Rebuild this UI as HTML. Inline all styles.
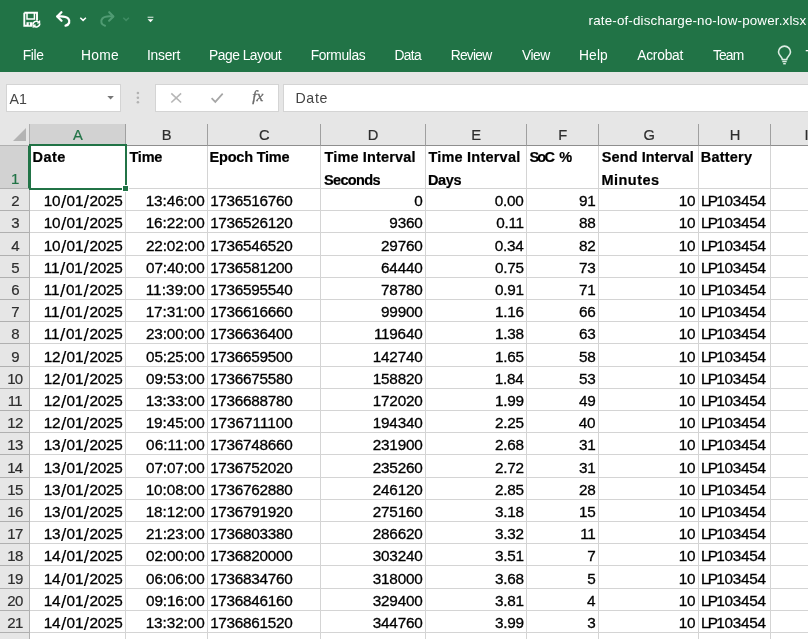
<!DOCTYPE html>
<html lang="en">
<head>
<meta charset="utf-8">
<title>rate-of-discharge-no-low-power.xlsx - Excel</title>
<style>
html,body{margin:0;padding:0;}
body{width:808px;height:639px;overflow:hidden;background:#fff;font-family:"Liberation Sans",sans-serif;}
#app{will-change:transform;position:relative;width:808px;height:639px;overflow:hidden;background:#fff;}
.t{position:absolute;white-space:nowrap;}
#grid .t{-webkit-text-stroke:0.3px;}
#rowhead .t,#colhead .t{-webkit-text-stroke:0.2px;}
#grid .b{-webkit-text-stroke:0.2px;}
.t i{font-style:normal;}
#top{position:absolute;left:0;top:0;width:808px;height:72px;background:#217346;}
.ico{position:absolute;}
#fbar{position:absolute;left:0;top:72px;width:808px;height:52px;background:#e6e6e6;}
.box{position:absolute;top:12px;height:26px;background:#fff;border:1px solid #d4d4d4;}
#namebox{left:6px;width:113px;}
#fxbox{left:155px;width:122px;}
#finput{left:283px;width:540px;}
#chrometext{position:absolute;left:0;top:0;}
#colhead{position:absolute;left:0;top:0;width:808px;height:145px;}
.corner{position:absolute;left:0;top:124px;width:30px;height:22px;background:#e6e6e6;box-sizing:border-box;border-bottom:1px solid #b0b0b0;border-right:1px solid #b0b0b0;}
.corner i{position:absolute;left:13px;top:4px;width:0;height:0;border-left:13px solid transparent;border-bottom:13px solid #b4b4b4;}
.ch{position:absolute;top:124px;box-sizing:border-box;background:#e6e6e6;border-right:1px solid #a0a0a0;border-bottom:1px solid #8e8e8e;height:22px;}
.ch.sel{background:#d2d2d2;border-bottom:2px solid #217346;}
#rowhead{position:absolute;left:0;top:0;width:30px;height:639px;}
.rh{position:absolute;left:0;width:30px;box-sizing:border-box;background:#e6e6e6;border-bottom:1px solid #b0b0b0;border-right:1px solid #b0b0b0;}
.rh.sel{background:#d2d2d2;border-right:2px solid #217346;}
#grid{position:absolute;left:0;top:0;width:808px;height:639px;}
.vl{position:absolute;top:146px;width:1px;height:500px;background:#d4d4d4;}
.hl{position:absolute;left:30px;width:800px;height:1px;background:#d4d4d4;}
#selbox{position:absolute;left:29px;top:144px;width:94px;height:42px;border:2px solid #217346;}
#selhandle{position:absolute;left:122px;top:185px;width:5px;height:5px;background:#217346;border:1px solid #fff;}
#topicons{position:absolute;left:0;top:0;}
#fbicons{position:absolute;left:0;top:72px;}
.d i{font-size:19px;line-height:0;position:relative;top:2px;-webkit-text-stroke:0.1px;}
</style>
</head>
<body>
<div id="app">
<div id="top"></div>
<svg id="topicons" width="808" height="72" viewBox="0 0 808 72" fill="none" stroke="#fff" stroke-width="1.4">
<g id="ico-save">
<path d="M24.3 12.8h12.700v7.600M24.3 12.800v13h8" stroke-width="1.900"/>
<path d="M27 13v6h7.400v-6" stroke-width="1.500"/>
<path d="M26.500 23.800h6" stroke-width="3.200"/>
<path d="M29.300 22.600v2.600" stroke="#217346" stroke-width="1.100"/>
<path d="M33 24.600a3.400 3.400 0 0 1 6.200-1.900M39.800 23.600a3.400 3.400 0 0 1-6.200 1.900" stroke-width="1.500"/>
<path d="M39.600 20.400v2.600h-2.600M33.200 27.800v-2.600h2.600" stroke-width="1.200"/>
</g>
<g id="ico-undo" stroke-width="2.300" stroke-linecap="round" stroke-linejoin="round">
<path d="M61.4 12.2L57.2 16.5l4.3 4.2"/>
<path d="M57.6 16.5c4-.4 8.200-.6 10.600 2.000c2.400 2.800 1 6.200-2.600 7.200"/>
</g>
<path d="M80.300 17.700l2.800 2.700l2.800-2.700" stroke-width="1.500"/>
<g id="ico-redo" stroke="#509b73" stroke-width="2.100" stroke-linecap="round" stroke-linejoin="round">
<path d="M109.2 12.2l4.200 4.300l-4.300 4.200"/>
<path d="M113 16.5c-4-.4-8.200-.6-10.600 2.000c-2.400 2.800-1 6.200 2.600 7.200"/>
</g>
<path d="M123.300 17.700l2.800 2.700l2.800-2.700" stroke="#3f8c63" stroke-width="1.500"/>
<g id="ico-qat" stroke="none" fill="#fff">
<rect x="147.600" y="16.700" width="5.800" height="1.100" fill="#d5e7dc"/>
<path d="M147.600 19.200h5.800l-2.900 3.100z"/>
</g>
<g id="ico-bulb" stroke="#dcede3" stroke-width="1.600">
<path d="M782.300 59.500c0-2.800-3.800-3.800-3.800-7.400a6 6 0 0 1 12 0c0 3.600-3.800 4.600-3.800 7.400z"/>
<path d="M782.300 61.500h4.400"/>
<path d="M783.200 63.700h2.600" stroke-width="1.400"/>
</g>
</svg>
<div id="fbar">
<div class="box" id="namebox"></div>
<div class="box" id="fxbox"></div>
<div class="box" id="finput"></div>
</div>
<svg id="fbicons" width="808" height="52" viewBox="0 72 808 52" fill="none">
<path d="M107.300 96h6.600l-3.300 3.600z" fill="#777"/>
<g fill="#b2b2b2"><circle cx="137.900" cy="93" r="1.300"/><circle cx="137.900" cy="97.700" r="1.300"/><circle cx="137.900" cy="102.300" r="1.300"/></g>
<path d="M171.300 93.300l9.800 9.200M181.100 93.300l-9.800 9.200" stroke="#b6b6b6" stroke-width="1.600"/>
<path d="M211.600 98.200l3.700 3.700l7.400-8.300" stroke="#a6a6a6" stroke-width="1.700"/>
</svg>
<div id="chrometext">
<span class="t" style="left:22.82px;top:47px;font-size:13.8px;line-height:18px;letter-spacing:-0.37px;color:#fff;">File</span>
<span class="t" style="left:81.12px;top:47px;font-size:13.8px;line-height:18px;letter-spacing:0.24px;color:#fff;">Home</span>
<span class="t" style="left:146.92px;top:47px;font-size:13.8px;line-height:18px;letter-spacing:-0.22px;color:#fff;">Insert</span>
<span class="t" style="left:209.12px;top:47px;font-size:13.8px;line-height:18px;letter-spacing:-0.50px;color:#fff;">Page Layout</span>
<span class="t" style="left:310.72px;top:47px;font-size:13.8px;line-height:18px;letter-spacing:-0.37px;color:#fff;">Formulas</span>
<span class="t" style="left:394.52px;top:47px;font-size:13.8px;line-height:18px;letter-spacing:-0.69px;color:#fff;">Data</span>
<span class="t" style="left:450.72px;top:47px;font-size:13.8px;line-height:18px;letter-spacing:-0.75px;color:#fff;">Review</span>
<span class="t" style="left:522.00px;top:47px;font-size:13.8px;line-height:18px;letter-spacing:-0.48px;color:#fff;">View</span>
<span class="t" style="left:579.02px;top:47px;font-size:13.8px;line-height:18px;letter-spacing:0.12px;color:#fff;">Help</span>
<span class="t" style="left:637.20px;top:47px;font-size:13.8px;line-height:18px;letter-spacing:-0.23px;color:#fff;">Acrobat</span>
<span class="t" style="left:712.88px;top:47px;font-size:13.8px;line-height:18px;letter-spacing:-0.81px;color:#fff;">Team</span>
<span class="t" style="left:805.58px;top:47px;font-size:13.8px;line-height:18px;color:#fff;">Tell</span>
<span class="t" style="left:588.56px;top:12px;font-size:13.4px;line-height:17px;letter-spacing:0.16px;color:#fff;">rate-of-discharge-no-low-power.xlsx</span>
<span class="t" style="left:9.40px;top:90px;font-size:14.2px;line-height:18px;letter-spacing:0.11px;color:#444;">A1</span>
<span class="t" style="left:295.39px;top:89px;font-size:14.2px;line-height:18px;letter-spacing:0.70px;color:#444;">Date</span>
<span class="t" style="left:252.30px;top:86px;font-size:15.5px;line-height:20px;color:#6a6a6a;font-family:'Liberation Serif',serif;font-style:italic;-webkit-text-stroke:0.35px;">fx</span>
</div>
<div id="colhead">
<div class="corner"><i></i></div>
<div class="ch sel" style="left:30px;width:96px"></div>
<div class="ch" style="left:126px;width:82px"></div>
<div class="ch" style="left:208px;width:113px"></div>
<div class="ch" style="left:321px;width:105px"></div>
<div class="ch" style="left:426px;width:101px"></div>
<div class="ch" style="left:527px;width:72px"></div>
<div class="ch" style="left:599px;width:100px"></div>
<div class="ch" style="left:699px;width:72px"></div>
<div class="ch" style="left:771px;width:129px"></div>
<span class="t" style="left:73.06px;top:126px;font-size:14.7px;line-height:19px;color:#217346;">A</span>
<span class="t" style="left:161.83px;top:126px;font-size:14.7px;line-height:19px;color:#2e2e2e;">B</span>
<span class="t" style="left:259.10px;top:126px;font-size:14.7px;line-height:19px;color:#2e2e2e;">C</span>
<span class="t" style="left:367.87px;top:126px;font-size:14.7px;line-height:19px;color:#2e2e2e;">D</span>
<span class="t" style="left:471.33px;top:126px;font-size:14.7px;line-height:19px;color:#2e2e2e;">E</span>
<span class="t" style="left:558.18px;top:126px;font-size:14.7px;line-height:19px;color:#2e2e2e;">F</span>
<span class="t" style="left:643.49px;top:126px;font-size:14.7px;line-height:19px;color:#2e2e2e;">G</span>
<span class="t" style="left:729.72px;top:126px;font-size:14.7px;line-height:19px;color:#2e2e2e;">H</span>
<span class="t" style="left:804.45px;top:126px;font-size:14.7px;line-height:19px;color:#2e2e2e;">I</span>
</div>
<div id="rowhead">
<div class="rh sel" style="top:146px;height:43px"></div>
<div class="rh" style="top:189px;height:22px"></div>
<div class="rh" style="top:211px;height:22px"></div>
<div class="rh" style="top:233px;height:23px"></div>
<div class="rh" style="top:256px;height:22px"></div>
<div class="rh" style="top:278px;height:22px"></div>
<div class="rh" style="top:300px;height:22px"></div>
<div class="rh" style="top:322px;height:22px"></div>
<div class="rh" style="top:344px;height:23px"></div>
<div class="rh" style="top:367px;height:22px"></div>
<div class="rh" style="top:389px;height:22px"></div>
<div class="rh" style="top:411px;height:22px"></div>
<div class="rh" style="top:433px;height:22px"></div>
<div class="rh" style="top:455px;height:23px"></div>
<div class="rh" style="top:478px;height:22px"></div>
<div class="rh" style="top:500px;height:22px"></div>
<div class="rh" style="top:522px;height:22px"></div>
<div class="rh" style="top:544px;height:22px"></div>
<div class="rh" style="top:566px;height:23px"></div>
<div class="rh" style="top:589px;height:22px"></div>
<div class="rh" style="top:611px;height:22px"></div>
<div class="rh" style="top:633px;height:22px"></div>
<span class="t" style="left:11.06px;top:169px;font-size:15.0px;line-height:20px;letter-spacing:-0.70px;color:#217346;">1</span>
<span class="t" style="left:11.18px;top:191px;font-size:15.0px;line-height:20px;letter-spacing:-0.70px;color:#2e2e2e;">2</span>
<span class="t" style="left:11.30px;top:213px;font-size:15.0px;line-height:20px;letter-spacing:-0.70px;color:#2e2e2e;">3</span>
<span class="t" style="left:11.30px;top:236px;font-size:15.0px;line-height:20px;letter-spacing:-0.70px;color:#2e2e2e;">4</span>
<span class="t" style="left:11.30px;top:258px;font-size:15.0px;line-height:20px;letter-spacing:-0.70px;color:#2e2e2e;">5</span>
<span class="t" style="left:11.18px;top:280px;font-size:15.0px;line-height:20px;letter-spacing:-0.70px;color:#2e2e2e;">6</span>
<span class="t" style="left:11.18px;top:302px;font-size:15.0px;line-height:20px;letter-spacing:-0.70px;color:#2e2e2e;">7</span>
<span class="t" style="left:11.30px;top:324px;font-size:15.0px;line-height:20px;letter-spacing:-0.70px;color:#2e2e2e;">8</span>
<span class="t" style="left:11.18px;top:347px;font-size:15.0px;line-height:20px;letter-spacing:-0.70px;color:#2e2e2e;">9</span>
<span class="t" style="left:7.13px;top:369px;font-size:15.0px;line-height:20px;letter-spacing:-0.70px;color:#2e2e2e;">10</span>
<span class="t" style="left:7.80px;top:391px;font-size:15.0px;line-height:20px;letter-spacing:-0.70px;color:#2e2e2e;">11</span>
<span class="t" style="left:7.24px;top:413px;font-size:15.0px;line-height:20px;letter-spacing:-0.70px;color:#2e2e2e;">12</span>
<span class="t" style="left:7.24px;top:435px;font-size:15.0px;line-height:20px;letter-spacing:-0.70px;color:#2e2e2e;">13</span>
<span class="t" style="left:7.13px;top:458px;font-size:15.0px;line-height:20px;letter-spacing:-0.70px;color:#2e2e2e;">14</span>
<span class="t" style="left:7.24px;top:480px;font-size:15.0px;line-height:20px;letter-spacing:-0.70px;color:#2e2e2e;">15</span>
<span class="t" style="left:7.24px;top:502px;font-size:15.0px;line-height:20px;letter-spacing:-0.70px;color:#2e2e2e;">16</span>
<span class="t" style="left:7.24px;top:524px;font-size:15.0px;line-height:20px;letter-spacing:-0.70px;color:#2e2e2e;">17</span>
<span class="t" style="left:7.24px;top:546px;font-size:15.0px;line-height:20px;letter-spacing:-0.70px;color:#2e2e2e;">18</span>
<span class="t" style="left:7.24px;top:569px;font-size:15.0px;line-height:20px;letter-spacing:-0.70px;color:#2e2e2e;">19</span>
<span class="t" style="left:7.24px;top:591px;font-size:15.0px;line-height:20px;letter-spacing:-0.70px;color:#2e2e2e;">20</span>
<span class="t" style="left:7.36px;top:613px;font-size:15.0px;line-height:20px;letter-spacing:-0.70px;color:#2e2e2e;">21</span>
<span class="t" style="left:7.36px;top:635px;font-size:15.0px;line-height:20px;letter-spacing:-0.70px;color:#2e2e2e;">22</span>
</div>
<div id="grid">
<div class="vl" style="left:125px"></div>
<div class="vl" style="left:207px"></div>
<div class="vl" style="left:320px"></div>
<div class="vl" style="left:425px"></div>
<div class="vl" style="left:526px"></div>
<div class="vl" style="left:598px"></div>
<div class="vl" style="left:698px"></div>
<div class="vl" style="left:770px"></div>
<div class="hl" style="top:188px"></div>
<div class="hl" style="top:210px"></div>
<div class="hl" style="top:232px"></div>
<div class="hl" style="top:255px"></div>
<div class="hl" style="top:277px"></div>
<div class="hl" style="top:299px"></div>
<div class="hl" style="top:321px"></div>
<div class="hl" style="top:343px"></div>
<div class="hl" style="top:366px"></div>
<div class="hl" style="top:388px"></div>
<div class="hl" style="top:410px"></div>
<div class="hl" style="top:432px"></div>
<div class="hl" style="top:454px"></div>
<div class="hl" style="top:477px"></div>
<div class="hl" style="top:499px"></div>
<div class="hl" style="top:521px"></div>
<div class="hl" style="top:543px"></div>
<div class="hl" style="top:565px"></div>
<div class="hl" style="top:588px"></div>
<div class="hl" style="top:610px"></div>
<div class="hl" style="top:632px"></div>
<div class="hl" style="top:654px"></div>
<span class="t b" style="left:32.59px;top:148px;font-size:14.5px;line-height:19px;letter-spacing:0.45px;color:#000;font-weight:bold;">Date</span>
<span class="t b" style="left:129.50px;top:148px;font-size:14.5px;line-height:19px;letter-spacing:-0.24px;color:#000;font-weight:bold;">Time</span>
<span class="t b" style="left:209.59px;top:148px;font-size:14.5px;line-height:19px;letter-spacing:-0.21px;color:#000;font-weight:bold;">Epoch Time</span>
<span class="t b" style="left:324.50px;top:148px;font-size:14.5px;line-height:19px;letter-spacing:0.15px;color:#000;font-weight:bold;">Time Interval</span>
<span class="t b" style="left:323.97px;top:171px;font-size:14.5px;line-height:19px;letter-spacing:-0.64px;color:#000;font-weight:bold;">Seconds</span>
<span class="t b" style="left:428.40px;top:148px;font-size:14.5px;line-height:19px;letter-spacing:0.22px;color:#000;font-weight:bold;">Time Interval</span>
<span class="t b" style="left:427.89px;top:171px;font-size:14.5px;line-height:19px;letter-spacing:-0.32px;color:#000;font-weight:bold;">Days</span>
<span class="t b" style="left:601.87px;top:148px;font-size:14.5px;line-height:19px;letter-spacing:0.08px;color:#000;font-weight:bold;">Send Interval</span>
<span class="t b" style="left:601.59px;top:171px;font-size:14.5px;line-height:19px;letter-spacing:0.44px;color:#000;font-weight:bold;">Minutes</span>
<span class="t b" style="left:700.79px;top:148px;font-size:14.5px;line-height:19px;letter-spacing:0.21px;color:#000;font-weight:bold;">Battery</span>
<span class="t b" style="left:529.47px;top:148px;font-size:14.5px;line-height:19px;letter-spacing:-1.80px;color:#000;font-weight:bold;">SoC</span>
<span class="t b" style="left:559.17px;top:148px;font-size:14.5px;line-height:19px;color:#000;font-weight:bold;">%</span>
<span class="t d" style="left:43.84px;top:191px;font-size:15.3px;line-height:20px;letter-spacing:-0.24px;color:#000;">10<i style="margin:0 0.60px">/</i>01<i style="margin:0 0.60px">/</i>2025</span>
<span class="t" style="left:145.64px;top:191px;font-size:15.3px;line-height:20px;letter-spacing:-0.06px;color:#000;">13:46:00</span>
<span class="t" style="left:210.14px;top:191px;font-size:15.3px;line-height:20px;letter-spacing:-0.26px;color:#000;">1736516760</span>
<span class="t" style="left:414.17px;top:191px;font-size:15.3px;line-height:20px;letter-spacing:-0.24px;color:#000;">0</span>
<span class="t" style="left:494.82px;top:191px;font-size:15.3px;line-height:20px;letter-spacing:-0.24px;color:#000;">0.00</span>
<span class="t" style="left:579.04px;top:191px;font-size:15.3px;line-height:20px;letter-spacing:-0.24px;color:#000;">91</span>
<span class="t" style="left:678.80px;top:191px;font-size:15.3px;line-height:20px;letter-spacing:-0.24px;color:#000;">10</span>
<span class="t lp" style="left:701.00px;top:191px;font-size:15.3px;line-height:20px;letter-spacing:-0.24px;color:#000;"><i style="letter-spacing:-1.75px">LP</i>103454</span>
<span class="t d" style="left:43.84px;top:213px;font-size:15.3px;line-height:20px;letter-spacing:-0.24px;color:#000;">10<i style="margin:0 0.60px">/</i>01<i style="margin:0 0.60px">/</i>2025</span>
<span class="t" style="left:145.64px;top:213px;font-size:15.3px;line-height:20px;letter-spacing:-0.06px;color:#000;">16:22:00</span>
<span class="t" style="left:210.14px;top:213px;font-size:15.3px;line-height:20px;letter-spacing:-0.26px;color:#000;">1736526120</span>
<span class="t" style="left:389.36px;top:213px;font-size:15.3px;line-height:20px;letter-spacing:-0.24px;color:#000;">9360</span>
<span class="t" style="left:496.20px;top:213px;font-size:15.3px;line-height:20px;letter-spacing:-0.24px;color:#000;">0.11</span>
<span class="t" style="left:579.04px;top:213px;font-size:15.3px;line-height:20px;letter-spacing:-0.24px;color:#000;">88</span>
<span class="t" style="left:678.80px;top:213px;font-size:15.3px;line-height:20px;letter-spacing:-0.24px;color:#000;">10</span>
<span class="t lp" style="left:701.00px;top:213px;font-size:15.3px;line-height:20px;letter-spacing:-0.24px;color:#000;"><i style="letter-spacing:-1.75px">LP</i>103454</span>
<span class="t d" style="left:43.84px;top:236px;font-size:15.3px;line-height:20px;letter-spacing:-0.24px;color:#000;">10<i style="margin:0 0.60px">/</i>01<i style="margin:0 0.60px">/</i>2025</span>
<span class="t" style="left:145.88px;top:236px;font-size:15.3px;line-height:20px;letter-spacing:-0.09px;color:#000;">22:02:00</span>
<span class="t" style="left:210.14px;top:236px;font-size:15.3px;line-height:20px;letter-spacing:-0.26px;color:#000;">1736546520</span>
<span class="t" style="left:381.10px;top:236px;font-size:15.3px;line-height:20px;letter-spacing:-0.24px;color:#000;">29760</span>
<span class="t" style="left:494.82px;top:236px;font-size:15.3px;line-height:20px;letter-spacing:-0.24px;color:#000;">0.34</span>
<span class="t" style="left:579.04px;top:236px;font-size:15.3px;line-height:20px;letter-spacing:-0.24px;color:#000;">82</span>
<span class="t" style="left:678.80px;top:236px;font-size:15.3px;line-height:20px;letter-spacing:-0.24px;color:#000;">10</span>
<span class="t lp" style="left:701.00px;top:236px;font-size:15.3px;line-height:20px;letter-spacing:-0.24px;color:#000;"><i style="letter-spacing:-1.75px">LP</i>103454</span>
<span class="t d" style="left:43.84px;top:258px;font-size:15.3px;line-height:20px;letter-spacing:-0.24px;color:#000;">11<i style="margin:0 0.88px">/</i>01<i style="margin:0 0.88px">/</i>2025</span>
<span class="t" style="left:146.12px;top:258px;font-size:15.3px;line-height:20px;letter-spacing:-0.13px;color:#000;">07:40:00</span>
<span class="t" style="left:210.14px;top:258px;font-size:15.3px;line-height:20px;letter-spacing:-0.26px;color:#000;">1736581200</span>
<span class="t" style="left:381.10px;top:258px;font-size:15.3px;line-height:20px;letter-spacing:-0.24px;color:#000;">64440</span>
<span class="t" style="left:495.06px;top:258px;font-size:15.3px;line-height:20px;letter-spacing:-0.24px;color:#000;">0.75</span>
<span class="t" style="left:579.04px;top:258px;font-size:15.3px;line-height:20px;letter-spacing:-0.24px;color:#000;">73</span>
<span class="t" style="left:678.80px;top:258px;font-size:15.3px;line-height:20px;letter-spacing:-0.24px;color:#000;">10</span>
<span class="t lp" style="left:701.00px;top:258px;font-size:15.3px;line-height:20px;letter-spacing:-0.24px;color:#000;"><i style="letter-spacing:-1.75px">LP</i>103454</span>
<span class="t d" style="left:43.84px;top:280px;font-size:15.3px;line-height:20px;letter-spacing:-0.24px;color:#000;">11<i style="margin:0 0.88px">/</i>01<i style="margin:0 0.88px">/</i>2025</span>
<span class="t" style="left:145.64px;top:280px;font-size:15.3px;line-height:20px;letter-spacing:0.10px;color:#000;">11:39:00</span>
<span class="t" style="left:210.14px;top:280px;font-size:15.3px;line-height:20px;letter-spacing:-0.26px;color:#000;">1736595540</span>
<span class="t" style="left:381.10px;top:280px;font-size:15.3px;line-height:20px;letter-spacing:-0.24px;color:#000;">78780</span>
<span class="t" style="left:495.06px;top:280px;font-size:15.3px;line-height:20px;letter-spacing:-0.24px;color:#000;">0.91</span>
<span class="t" style="left:579.04px;top:280px;font-size:15.3px;line-height:20px;letter-spacing:-0.24px;color:#000;">71</span>
<span class="t" style="left:678.80px;top:280px;font-size:15.3px;line-height:20px;letter-spacing:-0.24px;color:#000;">10</span>
<span class="t lp" style="left:701.00px;top:280px;font-size:15.3px;line-height:20px;letter-spacing:-0.24px;color:#000;"><i style="letter-spacing:-1.75px">LP</i>103454</span>
<span class="t d" style="left:43.84px;top:302px;font-size:15.3px;line-height:20px;letter-spacing:-0.24px;color:#000;">11<i style="margin:0 0.88px">/</i>01<i style="margin:0 0.88px">/</i>2025</span>
<span class="t" style="left:145.64px;top:302px;font-size:15.3px;line-height:20px;letter-spacing:-0.06px;color:#000;">17:31:00</span>
<span class="t" style="left:210.14px;top:302px;font-size:15.3px;line-height:20px;letter-spacing:-0.26px;color:#000;">1736616660</span>
<span class="t" style="left:381.10px;top:302px;font-size:15.3px;line-height:20px;letter-spacing:-0.24px;color:#000;">99900</span>
<span class="t" style="left:495.06px;top:302px;font-size:15.3px;line-height:20px;letter-spacing:-0.24px;color:#000;">1.16</span>
<span class="t" style="left:579.04px;top:302px;font-size:15.3px;line-height:20px;letter-spacing:-0.24px;color:#000;">66</span>
<span class="t" style="left:678.80px;top:302px;font-size:15.3px;line-height:20px;letter-spacing:-0.24px;color:#000;">10</span>
<span class="t lp" style="left:701.00px;top:302px;font-size:15.3px;line-height:20px;letter-spacing:-0.24px;color:#000;"><i style="letter-spacing:-1.75px">LP</i>103454</span>
<span class="t d" style="left:43.84px;top:324px;font-size:15.3px;line-height:20px;letter-spacing:-0.24px;color:#000;">11<i style="margin:0 0.88px">/</i>01<i style="margin:0 0.88px">/</i>2025</span>
<span class="t" style="left:145.88px;top:324px;font-size:15.3px;line-height:20px;letter-spacing:-0.09px;color:#000;">23:00:00</span>
<span class="t" style="left:210.14px;top:324px;font-size:15.3px;line-height:20px;letter-spacing:-0.26px;color:#000;">1736636400</span>
<span class="t" style="left:373.96px;top:324px;font-size:15.3px;line-height:20px;letter-spacing:-0.24px;color:#000;">119640</span>
<span class="t" style="left:495.06px;top:324px;font-size:15.3px;line-height:20px;letter-spacing:-0.24px;color:#000;">1.38</span>
<span class="t" style="left:579.04px;top:324px;font-size:15.3px;line-height:20px;letter-spacing:-0.24px;color:#000;">63</span>
<span class="t" style="left:678.80px;top:324px;font-size:15.3px;line-height:20px;letter-spacing:-0.24px;color:#000;">10</span>
<span class="t lp" style="left:701.00px;top:324px;font-size:15.3px;line-height:20px;letter-spacing:-0.24px;color:#000;"><i style="letter-spacing:-1.75px">LP</i>103454</span>
<span class="t d" style="left:43.84px;top:347px;font-size:15.3px;line-height:20px;letter-spacing:-0.24px;color:#000;">12<i style="margin:0 0.60px">/</i>01<i style="margin:0 0.60px">/</i>2025</span>
<span class="t" style="left:146.12px;top:347px;font-size:15.3px;line-height:20px;letter-spacing:-0.13px;color:#000;">05:25:00</span>
<span class="t" style="left:210.14px;top:347px;font-size:15.3px;line-height:20px;letter-spacing:-0.26px;color:#000;">1736659500</span>
<span class="t" style="left:372.83px;top:347px;font-size:15.3px;line-height:20px;letter-spacing:-0.24px;color:#000;">142740</span>
<span class="t" style="left:495.06px;top:347px;font-size:15.3px;line-height:20px;letter-spacing:-0.24px;color:#000;">1.65</span>
<span class="t" style="left:579.04px;top:347px;font-size:15.3px;line-height:20px;letter-spacing:-0.24px;color:#000;">58</span>
<span class="t" style="left:678.80px;top:347px;font-size:15.3px;line-height:20px;letter-spacing:-0.24px;color:#000;">10</span>
<span class="t lp" style="left:701.00px;top:347px;font-size:15.3px;line-height:20px;letter-spacing:-0.24px;color:#000;"><i style="letter-spacing:-1.75px">LP</i>103454</span>
<span class="t d" style="left:43.84px;top:369px;font-size:15.3px;line-height:20px;letter-spacing:-0.24px;color:#000;">12<i style="margin:0 0.60px">/</i>01<i style="margin:0 0.60px">/</i>2025</span>
<span class="t" style="left:146.12px;top:369px;font-size:15.3px;line-height:20px;letter-spacing:-0.13px;color:#000;">09:53:00</span>
<span class="t" style="left:210.14px;top:369px;font-size:15.3px;line-height:20px;letter-spacing:-0.26px;color:#000;">1736675580</span>
<span class="t" style="left:372.83px;top:369px;font-size:15.3px;line-height:20px;letter-spacing:-0.24px;color:#000;">158820</span>
<span class="t" style="left:494.82px;top:369px;font-size:15.3px;line-height:20px;letter-spacing:-0.24px;color:#000;">1.84</span>
<span class="t" style="left:579.04px;top:369px;font-size:15.3px;line-height:20px;letter-spacing:-0.24px;color:#000;">53</span>
<span class="t" style="left:678.80px;top:369px;font-size:15.3px;line-height:20px;letter-spacing:-0.24px;color:#000;">10</span>
<span class="t lp" style="left:701.00px;top:369px;font-size:15.3px;line-height:20px;letter-spacing:-0.24px;color:#000;"><i style="letter-spacing:-1.75px">LP</i>103454</span>
<span class="t d" style="left:43.84px;top:391px;font-size:15.3px;line-height:20px;letter-spacing:-0.24px;color:#000;">12<i style="margin:0 0.60px">/</i>01<i style="margin:0 0.60px">/</i>2025</span>
<span class="t" style="left:145.64px;top:391px;font-size:15.3px;line-height:20px;letter-spacing:-0.06px;color:#000;">13:33:00</span>
<span class="t" style="left:210.14px;top:391px;font-size:15.3px;line-height:20px;letter-spacing:-0.26px;color:#000;">1736688780</span>
<span class="t" style="left:372.83px;top:391px;font-size:15.3px;line-height:20px;letter-spacing:-0.24px;color:#000;">172020</span>
<span class="t" style="left:495.06px;top:391px;font-size:15.3px;line-height:20px;letter-spacing:-0.24px;color:#000;">1.99</span>
<span class="t" style="left:579.04px;top:391px;font-size:15.3px;line-height:20px;letter-spacing:-0.24px;color:#000;">49</span>
<span class="t" style="left:678.80px;top:391px;font-size:15.3px;line-height:20px;letter-spacing:-0.24px;color:#000;">10</span>
<span class="t lp" style="left:701.00px;top:391px;font-size:15.3px;line-height:20px;letter-spacing:-0.24px;color:#000;"><i style="letter-spacing:-1.75px">LP</i>103454</span>
<span class="t d" style="left:43.84px;top:413px;font-size:15.3px;line-height:20px;letter-spacing:-0.24px;color:#000;">12<i style="margin:0 0.60px">/</i>01<i style="margin:0 0.60px">/</i>2025</span>
<span class="t" style="left:145.64px;top:413px;font-size:15.3px;line-height:20px;letter-spacing:-0.06px;color:#000;">19:45:00</span>
<span class="t" style="left:210.14px;top:413px;font-size:15.3px;line-height:20px;letter-spacing:-0.01px;color:#000;">1736711100</span>
<span class="t" style="left:372.83px;top:413px;font-size:15.3px;line-height:20px;letter-spacing:-0.24px;color:#000;">194340</span>
<span class="t" style="left:495.06px;top:413px;font-size:15.3px;line-height:20px;letter-spacing:-0.24px;color:#000;">2.25</span>
<span class="t" style="left:578.80px;top:413px;font-size:15.3px;line-height:20px;letter-spacing:-0.24px;color:#000;">40</span>
<span class="t" style="left:678.80px;top:413px;font-size:15.3px;line-height:20px;letter-spacing:-0.24px;color:#000;">10</span>
<span class="t lp" style="left:701.00px;top:413px;font-size:15.3px;line-height:20px;letter-spacing:-0.24px;color:#000;"><i style="letter-spacing:-1.75px">LP</i>103454</span>
<span class="t d" style="left:43.84px;top:435px;font-size:15.3px;line-height:20px;letter-spacing:-0.24px;color:#000;">13<i style="margin:0 0.60px">/</i>01<i style="margin:0 0.60px">/</i>2025</span>
<span class="t" style="left:146.12px;top:435px;font-size:15.3px;line-height:20px;letter-spacing:0.03px;color:#000;">06:11:00</span>
<span class="t" style="left:210.14px;top:435px;font-size:15.3px;line-height:20px;letter-spacing:-0.26px;color:#000;">1736748660</span>
<span class="t" style="left:372.83px;top:435px;font-size:15.3px;line-height:20px;letter-spacing:-0.24px;color:#000;">231900</span>
<span class="t" style="left:495.06px;top:435px;font-size:15.3px;line-height:20px;letter-spacing:-0.24px;color:#000;">2.68</span>
<span class="t" style="left:579.04px;top:435px;font-size:15.3px;line-height:20px;letter-spacing:-0.24px;color:#000;">31</span>
<span class="t" style="left:678.80px;top:435px;font-size:15.3px;line-height:20px;letter-spacing:-0.24px;color:#000;">10</span>
<span class="t lp" style="left:701.00px;top:435px;font-size:15.3px;line-height:20px;letter-spacing:-0.24px;color:#000;"><i style="letter-spacing:-1.75px">LP</i>103454</span>
<span class="t d" style="left:43.84px;top:458px;font-size:15.3px;line-height:20px;letter-spacing:-0.24px;color:#000;">13<i style="margin:0 0.60px">/</i>01<i style="margin:0 0.60px">/</i>2025</span>
<span class="t" style="left:146.12px;top:458px;font-size:15.3px;line-height:20px;letter-spacing:-0.13px;color:#000;">07:07:00</span>
<span class="t" style="left:210.14px;top:458px;font-size:15.3px;line-height:20px;letter-spacing:-0.26px;color:#000;">1736752020</span>
<span class="t" style="left:372.83px;top:458px;font-size:15.3px;line-height:20px;letter-spacing:-0.24px;color:#000;">235260</span>
<span class="t" style="left:495.06px;top:458px;font-size:15.3px;line-height:20px;letter-spacing:-0.24px;color:#000;">2.72</span>
<span class="t" style="left:579.04px;top:458px;font-size:15.3px;line-height:20px;letter-spacing:-0.24px;color:#000;">31</span>
<span class="t" style="left:678.80px;top:458px;font-size:15.3px;line-height:20px;letter-spacing:-0.24px;color:#000;">10</span>
<span class="t lp" style="left:701.00px;top:458px;font-size:15.3px;line-height:20px;letter-spacing:-0.24px;color:#000;"><i style="letter-spacing:-1.75px">LP</i>103454</span>
<span class="t d" style="left:43.84px;top:480px;font-size:15.3px;line-height:20px;letter-spacing:-0.24px;color:#000;">13<i style="margin:0 0.60px">/</i>01<i style="margin:0 0.60px">/</i>2025</span>
<span class="t" style="left:145.64px;top:480px;font-size:15.3px;line-height:20px;letter-spacing:-0.06px;color:#000;">10:08:00</span>
<span class="t" style="left:210.14px;top:480px;font-size:15.3px;line-height:20px;letter-spacing:-0.26px;color:#000;">1736762880</span>
<span class="t" style="left:372.83px;top:480px;font-size:15.3px;line-height:20px;letter-spacing:-0.24px;color:#000;">246120</span>
<span class="t" style="left:495.06px;top:480px;font-size:15.3px;line-height:20px;letter-spacing:-0.24px;color:#000;">2.85</span>
<span class="t" style="left:579.04px;top:480px;font-size:15.3px;line-height:20px;letter-spacing:-0.24px;color:#000;">28</span>
<span class="t" style="left:678.80px;top:480px;font-size:15.3px;line-height:20px;letter-spacing:-0.24px;color:#000;">10</span>
<span class="t lp" style="left:701.00px;top:480px;font-size:15.3px;line-height:20px;letter-spacing:-0.24px;color:#000;"><i style="letter-spacing:-1.75px">LP</i>103454</span>
<span class="t d" style="left:43.84px;top:502px;font-size:15.3px;line-height:20px;letter-spacing:-0.24px;color:#000;">13<i style="margin:0 0.60px">/</i>01<i style="margin:0 0.60px">/</i>2025</span>
<span class="t" style="left:145.64px;top:502px;font-size:15.3px;line-height:20px;letter-spacing:-0.06px;color:#000;">18:12:00</span>
<span class="t" style="left:210.14px;top:502px;font-size:15.3px;line-height:20px;letter-spacing:-0.26px;color:#000;">1736791920</span>
<span class="t" style="left:372.83px;top:502px;font-size:15.3px;line-height:20px;letter-spacing:-0.24px;color:#000;">275160</span>
<span class="t" style="left:495.06px;top:502px;font-size:15.3px;line-height:20px;letter-spacing:-0.24px;color:#000;">3.18</span>
<span class="t" style="left:579.04px;top:502px;font-size:15.3px;line-height:20px;letter-spacing:-0.24px;color:#000;">15</span>
<span class="t" style="left:678.80px;top:502px;font-size:15.3px;line-height:20px;letter-spacing:-0.24px;color:#000;">10</span>
<span class="t lp" style="left:701.00px;top:502px;font-size:15.3px;line-height:20px;letter-spacing:-0.24px;color:#000;"><i style="letter-spacing:-1.75px">LP</i>103454</span>
<span class="t d" style="left:43.84px;top:524px;font-size:15.3px;line-height:20px;letter-spacing:-0.24px;color:#000;">13<i style="margin:0 0.60px">/</i>01<i style="margin:0 0.60px">/</i>2025</span>
<span class="t" style="left:145.88px;top:524px;font-size:15.3px;line-height:20px;letter-spacing:-0.09px;color:#000;">21:23:00</span>
<span class="t" style="left:210.14px;top:524px;font-size:15.3px;line-height:20px;letter-spacing:-0.26px;color:#000;">1736803380</span>
<span class="t" style="left:372.83px;top:524px;font-size:15.3px;line-height:20px;letter-spacing:-0.24px;color:#000;">286620</span>
<span class="t" style="left:495.06px;top:524px;font-size:15.3px;line-height:20px;letter-spacing:-0.24px;color:#000;">3.32</span>
<span class="t" style="left:580.18px;top:524px;font-size:15.3px;line-height:20px;letter-spacing:-0.24px;color:#000;">11</span>
<span class="t" style="left:678.80px;top:524px;font-size:15.3px;line-height:20px;letter-spacing:-0.24px;color:#000;">10</span>
<span class="t lp" style="left:701.00px;top:524px;font-size:15.3px;line-height:20px;letter-spacing:-0.24px;color:#000;"><i style="letter-spacing:-1.75px">LP</i>103454</span>
<span class="t d" style="left:43.84px;top:546px;font-size:15.3px;line-height:20px;letter-spacing:-0.24px;color:#000;">14<i style="margin:0 0.60px">/</i>01<i style="margin:0 0.60px">/</i>2025</span>
<span class="t" style="left:146.12px;top:546px;font-size:15.3px;line-height:20px;letter-spacing:-0.13px;color:#000;">02:00:00</span>
<span class="t" style="left:210.14px;top:546px;font-size:15.3px;line-height:20px;letter-spacing:-0.26px;color:#000;">1736820000</span>
<span class="t" style="left:372.83px;top:546px;font-size:15.3px;line-height:20px;letter-spacing:-0.24px;color:#000;">303240</span>
<span class="t" style="left:495.06px;top:546px;font-size:15.3px;line-height:20px;letter-spacing:-0.24px;color:#000;">3.51</span>
<span class="t" style="left:587.31px;top:546px;font-size:15.3px;line-height:20px;letter-spacing:-0.24px;color:#000;">7</span>
<span class="t" style="left:678.80px;top:546px;font-size:15.3px;line-height:20px;letter-spacing:-0.24px;color:#000;">10</span>
<span class="t lp" style="left:701.00px;top:546px;font-size:15.3px;line-height:20px;letter-spacing:-0.24px;color:#000;"><i style="letter-spacing:-1.75px">LP</i>103454</span>
<span class="t d" style="left:43.84px;top:569px;font-size:15.3px;line-height:20px;letter-spacing:-0.24px;color:#000;">14<i style="margin:0 0.60px">/</i>01<i style="margin:0 0.60px">/</i>2025</span>
<span class="t" style="left:146.12px;top:569px;font-size:15.3px;line-height:20px;letter-spacing:-0.13px;color:#000;">06:06:00</span>
<span class="t" style="left:210.14px;top:569px;font-size:15.3px;line-height:20px;letter-spacing:-0.26px;color:#000;">1736834760</span>
<span class="t" style="left:372.83px;top:569px;font-size:15.3px;line-height:20px;letter-spacing:-0.24px;color:#000;">318000</span>
<span class="t" style="left:495.06px;top:569px;font-size:15.3px;line-height:20px;letter-spacing:-0.24px;color:#000;">3.68</span>
<span class="t" style="left:587.31px;top:569px;font-size:15.3px;line-height:20px;letter-spacing:-0.24px;color:#000;">5</span>
<span class="t" style="left:678.80px;top:569px;font-size:15.3px;line-height:20px;letter-spacing:-0.24px;color:#000;">10</span>
<span class="t lp" style="left:701.00px;top:569px;font-size:15.3px;line-height:20px;letter-spacing:-0.24px;color:#000;"><i style="letter-spacing:-1.75px">LP</i>103454</span>
<span class="t d" style="left:43.84px;top:591px;font-size:15.3px;line-height:20px;letter-spacing:-0.24px;color:#000;">14<i style="margin:0 0.60px">/</i>01<i style="margin:0 0.60px">/</i>2025</span>
<span class="t" style="left:146.12px;top:591px;font-size:15.3px;line-height:20px;letter-spacing:-0.13px;color:#000;">09:16:00</span>
<span class="t" style="left:210.14px;top:591px;font-size:15.3px;line-height:20px;letter-spacing:-0.26px;color:#000;">1736846160</span>
<span class="t" style="left:372.83px;top:591px;font-size:15.3px;line-height:20px;letter-spacing:-0.24px;color:#000;">329400</span>
<span class="t" style="left:495.06px;top:591px;font-size:15.3px;line-height:20px;letter-spacing:-0.24px;color:#000;">3.81</span>
<span class="t" style="left:587.07px;top:591px;font-size:15.3px;line-height:20px;letter-spacing:-0.24px;color:#000;">4</span>
<span class="t" style="left:678.80px;top:591px;font-size:15.3px;line-height:20px;letter-spacing:-0.24px;color:#000;">10</span>
<span class="t lp" style="left:701.00px;top:591px;font-size:15.3px;line-height:20px;letter-spacing:-0.24px;color:#000;"><i style="letter-spacing:-1.75px">LP</i>103454</span>
<span class="t d" style="left:43.84px;top:613px;font-size:15.3px;line-height:20px;letter-spacing:-0.24px;color:#000;">14<i style="margin:0 0.60px">/</i>01<i style="margin:0 0.60px">/</i>2025</span>
<span class="t" style="left:145.64px;top:613px;font-size:15.3px;line-height:20px;letter-spacing:-0.06px;color:#000;">13:32:00</span>
<span class="t" style="left:210.14px;top:613px;font-size:15.3px;line-height:20px;letter-spacing:-0.26px;color:#000;">1736861520</span>
<span class="t" style="left:372.83px;top:613px;font-size:15.3px;line-height:20px;letter-spacing:-0.24px;color:#000;">344760</span>
<span class="t" style="left:495.06px;top:613px;font-size:15.3px;line-height:20px;letter-spacing:-0.24px;color:#000;">3.99</span>
<span class="t" style="left:587.31px;top:613px;font-size:15.3px;line-height:20px;letter-spacing:-0.24px;color:#000;">3</span>
<span class="t" style="left:678.80px;top:613px;font-size:15.3px;line-height:20px;letter-spacing:-0.24px;color:#000;">10</span>
<span class="t lp" style="left:701.00px;top:613px;font-size:15.3px;line-height:20px;letter-spacing:-0.24px;color:#000;"><i style="letter-spacing:-1.75px">LP</i>103454</span>
<div id="selbox"></div><div id="selhandle"></div>
</div>
</div>
</body>
</html>
